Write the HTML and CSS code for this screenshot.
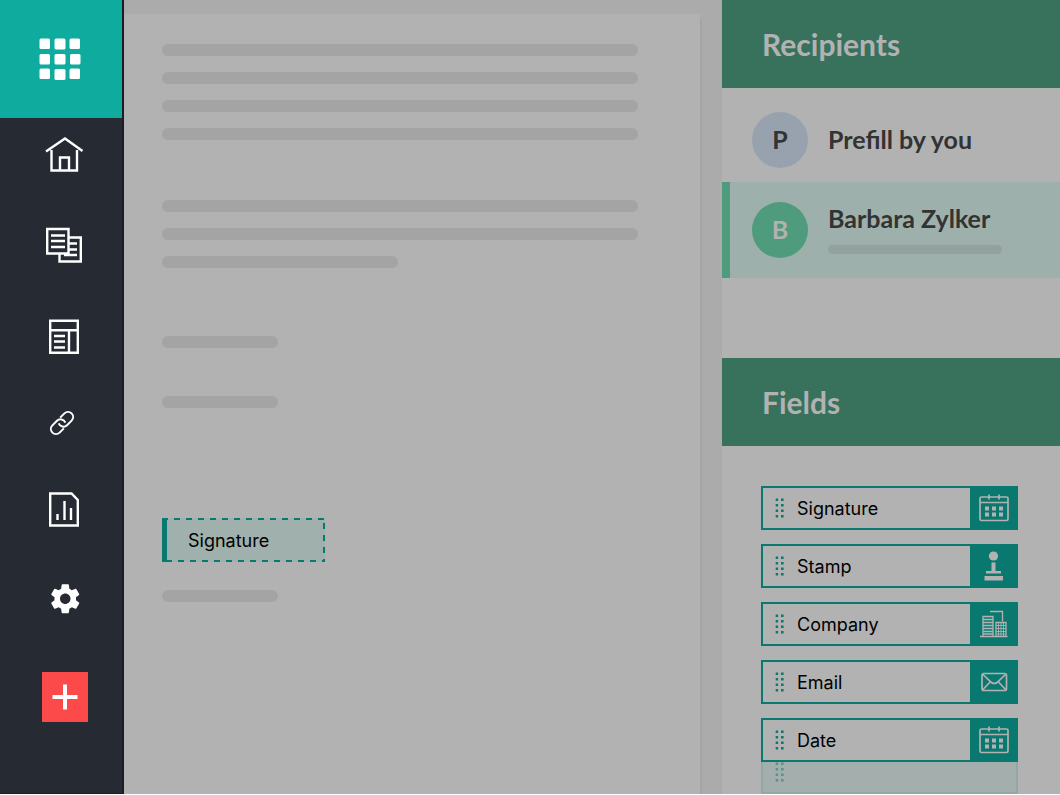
FILE: index.html
```html
<!DOCTYPE html>
<html lang="en">
<head>
    <meta charset="UTF-8">
    <meta name="viewport" content="width=device-width, initial-scale=1.0">
    <title>Document Editor</title>
    <link rel="stylesheet" href="styles.css">
</head>
<body>
    <!-- Shared icons -->
    <svg class="defs" width="0" height="0" aria-hidden="true">
        <symbol id="grip" viewBox="0 0 10 20">
            <path d="M.7.500h2.400v2.400h-2.400zM6 .500h2.600v2.400h-2.600zM.7 6h2.400v2.400h-2.400zM6 6h2.600v2.400h-2.600zM.7 11.500h2.400v2.400h-2.400zM6 11.500h2.600v2.400h-2.600zM.7 17h2.400v2.400h-2.400zM6 17h2.600v2.400h-2.600z" fill="currentColor"/>
        </symbol>
        <symbol id="calendar" viewBox="0 0 30 28">
            <rect x="1" y="3" width="28" height="23.5" rx="1.5" fill="none" stroke="currentColor" stroke-width="1.7"/>
            <path d="M1 8.5h28M10 0.500v5M20 0.500v5" fill="none" stroke="currentColor" stroke-width="1.7"/>
            <path d="M6 12.500h4v4h-4zM13 12.500h4v4h-4zM20 12.500h4v4h-4zM6 18.500h4v4h-4zM13 18.500h4v4h-4zM20 18.500h4v4h-4z" fill="currentColor"/>
        </symbol>
    </svg>

    <div class="app">
        <aside class="sidebar">
            <button class="apps" aria-label="Apps">
                <svg width="44" height="44" viewBox="0 0 44 44" fill="#fff">
                    <rect x="0.500" y="1.500" width="10.500" height="10.500" rx="1.5"/>
                    <rect x="15.500" y="1.500" width="11" height="11" rx="1.5"/>
                    <rect x="30.500" y="1.500" width="10.500" height="10.500" rx="1.5"/>
                    <rect x="0.500" y="17" width="10.500" height="10.500" rx="1.5"/>
                    <rect x="15.500" y="17" width="11" height="10.500" rx="1.5"/>
                    <rect x="31" y="17" width="10.500" height="10.500" rx="1.5"/>
                    <rect x="0.500" y="31.500" width="10.500" height="10.500" rx="1.5"/>
                    <rect x="15.500" y="32" width="11" height="11" rx="1.5"/>
                    <rect x="30.500" y="31.500" width="10.500" height="10.500" rx="1.5"/>
                </svg>
            </button>
            <nav class="menu">
                <a href="#" aria-label="Home">
                    <svg width="38" height="35" viewBox="0 0 38 35">
                        <path d="M1 14.500L20 1.500L37.500 14M6.500 13V33.500H32V13M15 33V20.500H24V33"/>
                    </svg>
                </a>
                <a href="#" aria-label="Documents">
                    <svg width="36" height="35" viewBox="0 0 36 35">
                        <path d="M1.200 1H22.500V25.500H1.200ZM23 9.500H34.800V33.500H13.500V26M5 7.500H19M5 13H19M5 19H19M23 15.500H31M23 21.500H31M18 27H31"/>
                    </svg>
                </a>
                <a href="#" aria-label="Templates">
                    <svg width="30" height="35" viewBox="0 0 30 35">
                        <path d="M1.200 1.700H28.800V33.700H1.200ZM1 11.300H29M20 11V33M5 17H16M5 22.500H16M5 28.500H16"/>
                    </svg>
                </a>
                <a href="#" aria-label="Links">
                    <svg width="26" height="26" viewBox="0 0 26 26">
                        <g transform="translate(11 13) rotate(-45)" stroke-width="2">
                            <path d="M2.500 -5.100H8.500A5.100 5.100 0 0 1 8.500 5.100H2A5.100 5.100 0 0 1 -2.700 -2"/>
                            <path d="M-2.500 5.100H-8.500A5.100 5.100 0 0 1 -8.500 -5.100H-2A5.100 5.100 0 0 1 2.700 2"/>
                        </g>
                    </svg>
                </a>
                <a href="#" aria-label="Reports">
                    <svg width="30" height="35" viewBox="0 0 30 35">
                        <path d="M1.200 1.500H22.500L28.800 8V33.500H1.200ZM8.500 22V28M15.500 9V28M22 16V28"/>
                    </svg>
                </a>
                <a href="#" aria-label="Settings">
                    <svg class="gear" width="33" height="33" viewBox="0.5 1.5 22 22">
                        <path d="M19.140 12.940c.04-.3.06-.61.06-.94 0-.32-.02-.64-.07-.94l2.030-1.580c.18-.14.23-.41.12-.61l-1.920-3.320c-.12-.22-.37-.29-.59-.22l-2.390.96c-.5-.38-1.030-.7-1.620-.94l-.36-2.540c-.04-.24-.24-.41-.48-.41h-3.840c-.24 0-.43.17-.47.41l-.36 2.540c-.59.24-1.130.57-1.620.94l-2.390-.96c-.22-.08-.47 0-.59.22L2.740 8.870c-.12.21-.08.47.12.61l2.030 1.580c-.05.3-.09.63-.09.94s.02.64.07.94l-2.030 1.580c-.18.14-.23.41-.12.61l1.920 3.320c.12.22.37.29.59.22l2.390-.96c.5.38 1.030.7 1.620.94l.36 2.540c.05.24.24.41.48.41h3.840c.24 0 .44-.17.47-.41l.36-2.540c.59-.24 1.130-.56 1.620-.94l2.390.96c.22.08.47 0 .59-.22l1.920-3.320c.12-.22.07-.47-.12-.61l-2.010-1.580zM12 15.500c-1.930 0-3.500-1.570-3.500-3.500s1.570-3.500 3.500-3.500 3.500 1.570 3.500 3.500-1.570 3.500-3.500 3.500z"/>
                    </svg>
                </a>
                <button class="add" aria-label="Add">
                    <svg width="26" height="26" viewBox="0 0 26 26">
                        <path d="M0.500 13H25.500M13 0.500V25.500" stroke-width="4"/>
                    </svg>
                </button>
            </nav>
        </aside>

        <main class="workspace">
            <div class="page">
                <div class="paragraph">
                    <div class="line"></div>
                    <div class="line"></div>
                    <div class="line"></div>
                    <div class="line"></div>
                </div>
                <div class="paragraph">
                    <div class="line"></div>
                    <div class="line"></div>
                    <div class="line half"></div>
                </div>
                <div class="entries">
                    <div class="line short"></div>
                    <div class="line short"></div>
                </div>
                <div class="signer">
                    <button class="placed-field">Signature</button>
                    <div class="line short"></div>
                </div>
            </div>
        </main>

        <aside class="panel">
            <section class="recipients">
                <h2>Recipients</h2>
                <div class="recipient">
                    <span class="avatar">P</span>
                    <span class="name">Prefill by you</span>
                </div>
                <div class="recipient active">
                    <span class="avatar">B</span>
                    <div class="details">
                        <span class="name">Barbara Zylker</span>
                        <div class="email-line"></div>
                    </div>
                </div>
            </section>
            <section>
                <h2>Fields</h2>
                <div class="fields">
                    <button class="field">
                        <svg class="grip" width="10" height="20"><use href="#grip"/></svg>
                        <span class="label">Signature</span>
                        <span class="icon"><svg width="30" height="28"><use href="#calendar"/></svg></span>
                    </button>
                    <button class="field">
                        <svg class="grip" width="10" height="20"><use href="#grip"/></svg>
                        <span class="label">Stamp</span>
                        <span class="icon">
                            <svg width="30" height="30" viewBox="0 0 30 30" fill="currentColor">
                                <circle cx="14.500" cy="5" r="4.600"/>
                                <path d="M12.500 11.500h4v8.500h5.500v2.500h-15v-2.500h5.500zM5.500 25h18.500v4.500h-18.500z"/>
                            </svg>
                        </span>
                    </button>
                    <button class="field">
                        <svg class="grip" width="10" height="20"><use href="#grip"/></svg>
                        <span class="label">Company</span>
                        <span class="icon">
                            <svg width="30" height="28" viewBox="0 0 30 28" fill="none" stroke="currentColor">
                                <path d="M1 26.500H28.500M11 1.500H23.500V11.500" stroke-width="1.300"/>
                                <path d="M4 26V6.500H14V26M4 9.500H14M4 12.500H14M4 15.500H14M4 18.500H14M4 21.500H14M4 24H14" stroke-width="1.300"/>
                                <path d="M17 26V12.500H27V26" stroke-width="1.300"/>
                                <path d="M17 15.500H27M17 18.500H27M17 21.500H27M17 24H27M19.500 13V26M22 13V26M24.500 13V26" stroke-width="0.900"/>
                            </svg>
                        </span>
                    </button>
                    <button class="field">
                        <svg class="grip" width="10" height="20"><use href="#grip"/></svg>
                        <span class="label">Email</span>
                        <span class="icon">
                            <svg width="28" height="20" viewBox="0 0 28 20" fill="none" stroke="currentColor" stroke-width="1.700">
                                <rect x="2" y="1.500" width="24.500" height="17" rx="2"/>
                                <path d="M3 2.500L11.500 10.500Q14.200 12.500 17 10.500L25.500 2.500M3 17.500L10.500 9.500M25.500 17.500L18 9.500"/>
                            </svg>
                        </span>
                    </button>
                    <button class="field">
                        <svg class="grip" width="10" height="20"><use href="#grip"/></svg>
                        <span class="label">Date</span>
                        <span class="icon"><svg width="30" height="28"><use href="#calendar"/></svg></span>
                    </button>
                    <div class="ghost">
                        <svg class="grip" width="10" height="20"><use href="#grip"/></svg>
                    </div>
                </div>
            </section>
        </aside>
    </div>
</body>
</html>
```
FILE: styles.css
```css
* {
    box-sizing: border-box;
}
body {
    margin: 0;
    background-color: #fff;
    color: #000;
    font-family: Inter, "Liberation Sans", sans-serif;
    font-size: 18px;
}
button {
    border: none;
    padding: 0;
    font: inherit;
    color: inherit;
    cursor: pointer;
}
svg {
    display: block;
}
.defs {
    position: absolute;
}
.app {
    display: grid;
    grid-template-columns: 124px 1fr 338px;
    min-height: calc(100vh - 1px);
}

/* Left menu */
.sidebar {
    background-color: #262a33;
    border-right: 2px solid #1b1c27;
    border-bottom: 1px solid #1b1c27;
}
.apps {
    display: flex;
    justify-content: center;
    align-items: center;
    width: 100%;
    height: 118px;
    background-color: #0fab9e;
}
.menu {
    display: flex;
    flex-direction: column;
    align-items: center;
    gap: 56px;
    padding: 19px 0 0 8px;
}
.menu a {
    padding-right: 2px;
}
.menu svg {
    overflow: visible;
    fill: none;
    stroke: #fff;
    stroke-width: 2.4;
}
.menu .gear {
    fill: #fff;
    stroke: none;
}
.add {
    display: flex;
    justify-content: center;
    align-items: center;
    width: 46px;
    height: 50px;
    background-color: #fc4a4a;
}

/* Document */
.workspace {
    background-color: #ababab;
    padding: 14px 22px 0 0;
    overflow: hidden;
}
.page {
    height: 100%;
    padding: 30px 38px 0;
    background-color: #b2b2b2;
    box-shadow: 1px 5px 2px #a0a0a0;
}
.line {
    width: 100%;
    max-width: 476px;
    height: 12px;
    border-radius: 6px;
    background-color: #a4a4a4;
}
.line.half {
    max-width: 236px;
}
.line.short {
    max-width: 116px;
}
.paragraph {
    display: flex;
    flex-direction: column;
    gap: 16px;
    margin-bottom: 60px;
}
.entries {
    display: flex;
    flex-direction: column;
    gap: 48px;
    padding-top: 8px;
    margin-bottom: 110px;
}
.signer {
    display: flex;
    flex-direction: column;
    gap: 28px;
}
.placed-field {
    width: 163px;
    height: 44px;
    padding-left: 21px;
    border-left: 5px solid #09796f;
    text-align: left;
    /* dashed frame: top, bottom, right */
    background:
        repeating-linear-gradient(90deg, #09796f 0 1px, transparent 1px 7px, #09796f 7px 12px) 0 0 / 100% 2px no-repeat,
        repeating-linear-gradient(90deg, #09796f 0 5px, transparent 5px 11px, #09796f 11px 12px) 0 100% / 100% 2px no-repeat,
        repeating-linear-gradient(0deg, #09796f 0 3px, transparent 3px 9px, #09796f 9px 12px) 100% 0 / 2px 100% no-repeat,
        #9fb0ad;
}

/* Right panel */
.panel {
    background-color: #b2b2b2;
}
h2 {
    margin: 0;
    padding-left: 40px;
    background-color: #38725d;
    color: #b2b2b2;
    font-family: Lato, sans-serif;
    font-size: 30px;
    font-weight: 700;
    line-height: 88px;
}
.recipients {
    padding-bottom: 80px;
}
.recipient {
    display: flex;
    align-items: center;
    gap: 20px;
    padding: 24px 30px 14px;
    font-family: Lato, sans-serif;
    font-size: 25px;
    font-weight: 700;
    line-height: 32px;
    color: #333;
}
.recipient.active {
    padding: 20px 30px 20px 22px;
    border-left: 8px solid #4f9b7d;
    background-color: #9eb0ab;
}
.name {
    padding-bottom: 2px;
}
.avatar {
    width: 56px;
    height: 56px;
    border-radius: 50%;
    background-color: #98a2af;
    text-align: center;
    line-height: 54px;
}
.active .avatar {
    background-color: #4f9b7d;
    color: #b2b2b2;
}
.details {
    display: flex;
    flex-direction: column;
    gap: 9px;
    padding-bottom: 4px;
}
.email-line {
    width: 174px;
    height: 9px;
    border-radius: 5px;
    background-color: #93a29d;
}
.fields {
    display: flex;
    flex-direction: column;
    gap: 14px;
    padding: 40px 42px 0 39px;
}
.field {
    display: flex;
    align-items: stretch;
    height: 44px;
    border: 2px solid #09796f;
    border-right: none;
    background-color: #b2b2b2;
}
.grip {
    align-self: center;
    margin-left: 12px;
    color: #09796f;
}
.label {
    align-self: center;
    flex: 1;
    padding-left: 12px;
    text-align: left;
}
.icon {
    display: flex;
    justify-content: center;
    align-items: center;
    width: 48px;
    margin: -2px 0;
    background-color: #09796f;
    color: #b2b2b2;
}
.ghost {
    display: flex;
    height: 32px;
    margin-top: -14px;
    border: 2px solid #93a7a4;
    border-top: none;
    background-color: #a4aeac;
}
.ghost .grip {
    align-self: flex-start;
    opacity: 0.5;
}
```
